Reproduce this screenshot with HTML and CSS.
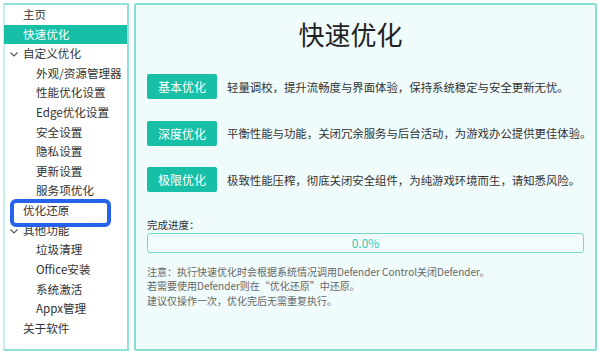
FILE: index.html
```html
<!DOCTYPE html>
<html lang="zh-CN">
<head>
<meta charset="utf-8">
<link rel="stylesheet" href="styles.css">
</head>
<body>
<div class="app">
  <nav class="side">
    <div class="item l1">主页</div>
    <div class="item l1 active">快速优化</div>
    <div class="item l1 group"><svg class="chev" viewBox="0 0 8 5" width="8" height="5"><path d="M0.5 0.5 L4 4 L7.5 0.5" fill="none" stroke="#555" stroke-width="1.1"/></svg>自定义优化</div>
    <div class="item l2">外观/资源管理器</div>
    <div class="item l2">性能优化设置</div>
    <div class="item l2">Edge优化设置</div>
    <div class="item l2">安全设置</div>
    <div class="item l2">隐私设置</div>
    <div class="item l2">更新设置</div>
    <div class="item l2">服务项优化</div>
    <div class="item l1">优化还原</div>
    <div class="item l1 group"><svg class="chev" viewBox="0 0 8 5" width="8" height="5"><path d="M0.5 0.5 L4 4 L7.5 0.5" fill="none" stroke="#555" stroke-width="1.1"/></svg>其他功能</div>
    <div class="item l2">垃圾清理</div>
    <div class="item l2">Office安装</div>
    <div class="item l2">系统激活</div>
    <div class="item l2">Appx管理</div>
    <div class="item l1">关于软件</div>
    <div class="highlight"></div>
  </nav>
  <main class="content">
    <h1 class="title">快速优化</h1>
    <div class="rows">
      <div class="row"><button class="btn">基本优化</button><span class="desc">轻量调校，提升流畅度与界面体验，保持系统稳定与安全更新无忧。</span></div>
      <div class="row"><button class="btn">深度优化</button><span class="desc">平衡性能与功能，关闭冗余服务与后台活动，为游戏办公提供更佳体验。</span></div>
      <div class="row"><button class="btn">极限优化</button><span class="desc">极致性能压榨，彻底关闭安全组件，为纯游戏环境而生，请知悉风险。</span></div>
    </div>
    <div class="plabel">完成进度：</div>
    <div class="progress">0.0%</div>
    <div class="notes">
      <div>注意：执行快速优化时会根据系统情况调用Defender Control关闭Defender。</div>
      <div>若需要使用Defender则在“优化还原”中还原。</div>
      <div>建议仅操作一次，优化完后无需重复执行。</div>
    </div>
  </main>
</div>
</body>
</html>
```

FILE: styles.css
```css
* { box-sizing: border-box; }
html, body { margin: 0; padding: 0; background: #fff; }
body {
  font-family: "Noto Sans CJK SC", "Noto Sans", "DejaVu Sans", sans-serif;
  color: #333;
}
.app {
  display: flex;
  gap: 5px;
  padding: 3px;
  height: 354px;
}
.side {
  position: relative;
  width: 126px;
  height: 348px;
  border: 2px solid #8fe1d7;
  border-left-color: #c6eeea;
  background: #fff;
  display: flex;
  flex-direction: column;
}
.item {
  height: 19.62px;
  line-height: 19.62px;
  font-size: 11.6px;
  color: #333;
  white-space: nowrap;
  display: flex;
  align-items: center;
}
.l1 { padding-left: 18px; }
.l2 { padding-left: 31px; }
.active {
  background: #17bfa7;
  color: #fff;
  margin-left: -1px;
  padding-left: 19px;
}
.group { position: relative; }
.chev {
  position: absolute;
  left: 5px;
  top: 8px;
}
.highlight {
  position: absolute;
  left: 5px;
  top: 194px;
  width: 101px;
  height: 28px;
  border: 4px solid #2563eb;
  border-radius: 6px;
}
.content {
  width: 463px;
  height: 348px;
  border: 2px solid #86ded3;
  border-radius: 2px;
  background: #f0fbfb;
  padding: 12px 11px 0 11px;
  display: flex;
  flex-direction: column;
}
.title {
  margin: 0;
  padding-right: 30px;
  font-size: 26px;
  font-weight: normal;
  line-height: 34px;
  text-align: center;
  color: #222;
}
.rows {
  margin-top: 23px;
  display: flex;
  flex-direction: column;
  gap: 21.5px;
}
.row {
  display: flex;
  align-items: center;
  gap: 10px;
}
.btn {
  width: 70px;
  height: 25px;
  border: none;
  border-radius: 2px;
  background: #17bfa7;
  color: #fff;
  font-family: inherit;
  font-size: 12px;
  padding: 0;
  flex: none;
}
.desc {
  font-size: 11.4px;
  color: #333;
  white-space: nowrap;
}
.plabel {
  margin-top: 26px;
  font-size: 10.5px;
  line-height: 14px;
  color: #333;
}
.progress {
  margin-top: 1px;
  height: 20px;
  border: 1.5px solid #6fd9cb;
  border-radius: 3px;
  background: #f3fcfc;
  color: #3cc9b6;
  font-size: 12px;
  line-height: 17px;
  text-align: center;
}
.notes {
  margin-top: 12px;
  font-size: 10px;
  line-height: 14.3px;
  color: #666;
  white-space: nowrap;
}
```
